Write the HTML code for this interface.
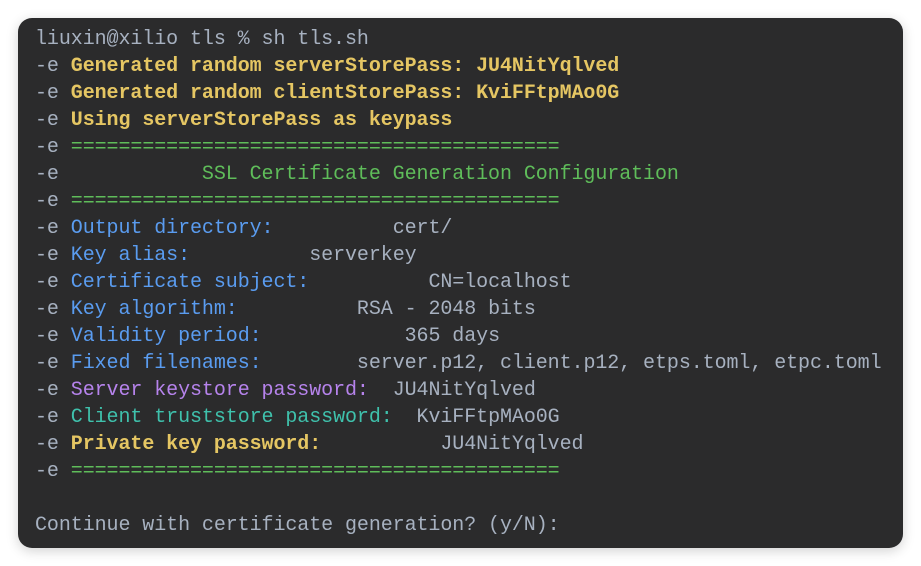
<!DOCTYPE html>
<html><head><meta charset="utf-8"><style>
html,body{margin:0;padding:0;background:#fff;width:921px;height:566px;overflow:hidden}
.win{position:absolute;left:18px;top:18px;width:885px;height:530px;background:#2b2b2c;border-radius:14px;box-shadow:0 3px 12px rgba(0,0,0,.18)}
pre{position:absolute;left:17px;top:8px;margin:0;font-family:"Liberation Mono",monospace;font-size:20px;letter-spacing:-0.08px;line-height:27px;color:#a7b1c0;white-space:pre}
.y{color:#e5c663;font-weight:bold}
.g{color:#5fbd5a}
.b{color:#5a9cf0}
.p{color:#b683ec}
.t{color:#3fc1ac}
</style></head><body><div class="win"><pre>liuxin@xilio tls % sh tls.sh
-e <span class="y">Generated random serverStorePass: JU4NitYqlved</span>
-e <span class="y">Generated random clientStorePass: KviFFtpMAo0G</span>
-e <span class="y">Using serverStorePass as keypass</span>
-e <span class="g">=========================================</span>
-e <span class="g">           SSL Certificate Generation Configuration</span>
-e <span class="g">=========================================</span>
-e <span class="b">Output directory:</span>          cert/
-e <span class="b">Key alias:</span>          serverkey
-e <span class="b">Certificate subject:</span>          CN=localhost
-e <span class="b">Key algorithm:</span>          RSA - 2048 bits
-e <span class="b">Validity period:</span>            365 days
-e <span class="b">Fixed filenames:</span>        server.p12, client.p12, etps.toml, etpc.toml
-e <span class="p">Server keystore password:</span>  JU4NitYqlved
-e <span class="t">Client truststore password:</span>  KviFFtpMAo0G
-e <span class="y">Private key password:</span>          JU4NitYqlved
-e <span class="g">=========================================</span>

Continue with certificate generation? (y/N): </pre></div></body></html>
